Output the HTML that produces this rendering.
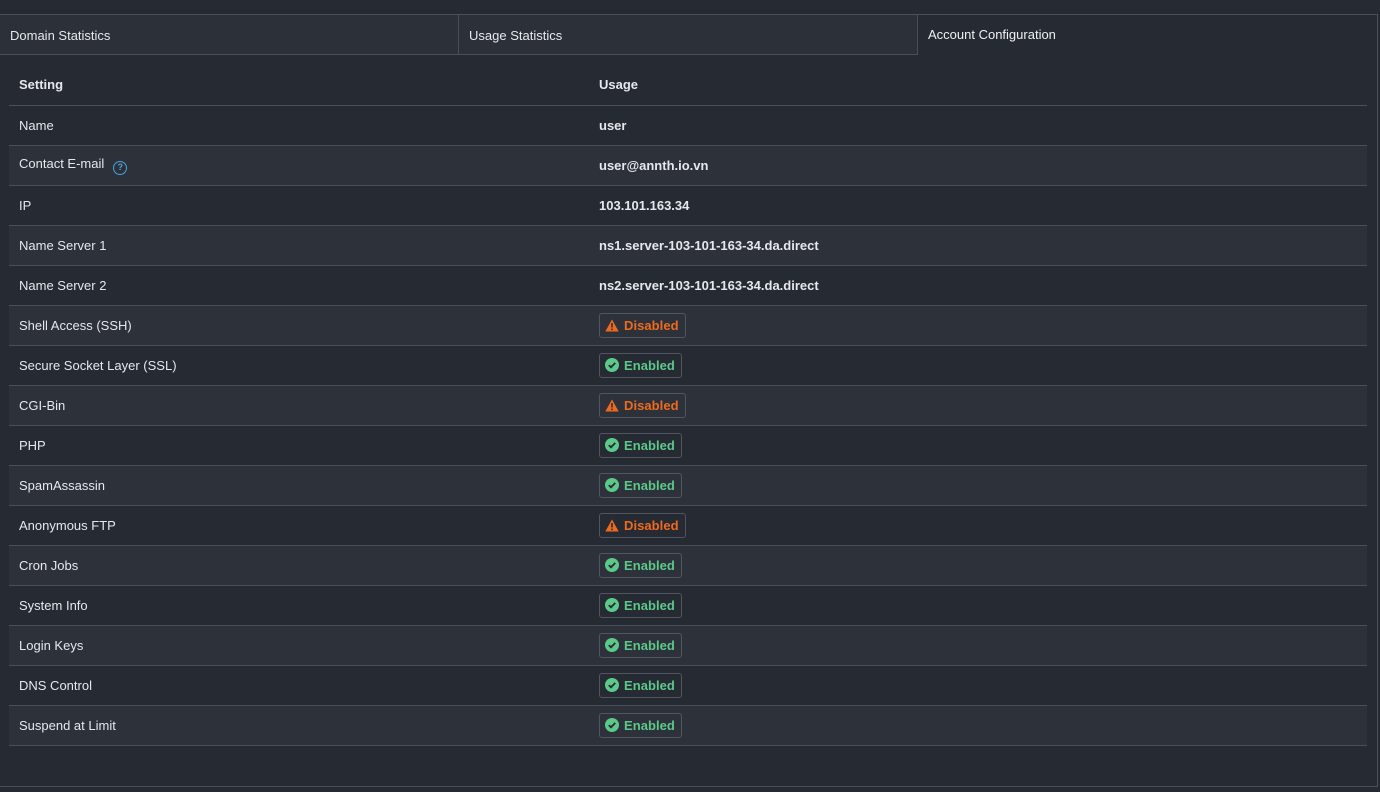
<!DOCTYPE html>
<html><head><meta charset="utf-8"><style>
*{box-sizing:border-box;margin:0;padding:0}
body{width:1380px;height:792px;background:#262a33;font-family:"Liberation Sans",sans-serif;font-size:13px;color:#e6e8ec;position:relative;overflow:hidden}
.panel{position:absolute;left:-1px;top:14px;width:1379px;height:773px;border:1px solid #4a4f5c}
.tab{position:absolute;top:14px;height:41px;line-height:41px;padding-left:10px;font-size:13px}
.t1{left:0;width:459px;background:#2c3039;border-top:1px solid #4a4f5c;border-bottom:1px solid #4a4f5c;border-right:1px solid #4a4f5c}
.t2{left:459px;width:459px;background:#2c3039;border-top:1px solid #4a4f5c;border-bottom:1px solid #4a4f5c;border-right:1px solid #4a4f5c}
.t3{left:918px;padding-left:10px;color:#eef0f3}
table{position:absolute;left:9px;top:64px;width:1358px;border-collapse:collapse}
td,th{height:40px;padding-left:10px;text-align:left;border-bottom:1px solid #4a4f5c;vertical-align:middle}
th{font-weight:bold;height:41px}
td:first-child,th:first-child{width:580px}
td.v{font-weight:bold}
tr.s td{background:#2d313a}
.b{display:inline-flex;align-items:center;gap:5px;height:25px;padding:0 6px 0 5px;border:1px solid #50555f;border-radius:3px;font-weight:bold;font-size:13px;letter-spacing:0.05px;vertical-align:middle}
.d{color:#f06a1e}.e{color:#5cc98a}
.q{display:inline-block;width:14px;height:14px;border:1.5px solid #4aa3e0;border-radius:50%;color:#4aa3e0;font-size:9px;line-height:11px;text-align:center;margin-left:9px;vertical-align:-2px;font-weight:bold}
</style></head><body>
<div class="panel"></div>
<div class="tab t1">Domain Statistics</div>
<div class="tab t2">Usage Statistics</div>
<div class="tab t3">Account Configuration</div>
<table>
<tr><th>Setting</th><th>Usage</th></tr>
<tr><td>Name</td><td class="v">user</td></tr>
<tr class="s"><td>Contact E-mail<span class="q">?</span></td><td class="v">user@annth.io.vn</td></tr>
<tr><td>IP</td><td class="v">103.101.163.34</td></tr>
<tr class="s"><td>Name Server 1</td><td class="v">ns1.server-103-101-163-34.da.direct</td></tr>
<tr><td>Name Server 2</td><td class="v">ns2.server-103-101-163-34.da.direct</td></tr>
<tr class="s"><td>Shell Access (SSH)</td><td><span class="b d"><svg width="14" height="13" viewBox="0 0 14 13"><path d="M7 0.5L13.7 12.5H0.3Z" fill="#f06a1e"/><rect x="6.2" y="4" width="1.6" height="4.5" fill="#2d313a"/><rect x="6.2" y="9.6" width="1.6" height="1.6" fill="#2d313a"/></svg>Disabled</span></td></tr>
<tr><td>Secure Socket Layer (SSL)</td><td><span class="b e"><svg width="14" height="14" viewBox="0 0 14 14"><circle cx="7" cy="7" r="7" fill="#5cc98a"/><path d="M3.8 7.2L6 9.3L10.3 4.9" stroke="#262a33" stroke-width="1.8" fill="none"/></svg>Enabled</span></td></tr>
<tr class="s"><td>CGI-Bin</td><td><span class="b d"><svg width="14" height="13" viewBox="0 0 14 13"><path d="M7 0.5L13.7 12.5H0.3Z" fill="#f06a1e"/><rect x="6.2" y="4" width="1.6" height="4.5" fill="#2d313a"/><rect x="6.2" y="9.6" width="1.6" height="1.6" fill="#2d313a"/></svg>Disabled</span></td></tr>
<tr><td>PHP</td><td><span class="b e"><svg width="14" height="14" viewBox="0 0 14 14"><circle cx="7" cy="7" r="7" fill="#5cc98a"/><path d="M3.8 7.2L6 9.3L10.3 4.9" stroke="#262a33" stroke-width="1.8" fill="none"/></svg>Enabled</span></td></tr>
<tr class="s"><td>SpamAssassin</td><td><span class="b e"><svg width="14" height="14" viewBox="0 0 14 14"><circle cx="7" cy="7" r="7" fill="#5cc98a"/><path d="M3.8 7.2L6 9.3L10.3 4.9" stroke="#262a33" stroke-width="1.8" fill="none"/></svg>Enabled</span></td></tr>
<tr><td>Anonymous FTP</td><td><span class="b d"><svg width="14" height="13" viewBox="0 0 14 13"><path d="M7 0.5L13.7 12.5H0.3Z" fill="#f06a1e"/><rect x="6.2" y="4" width="1.6" height="4.5" fill="#262a33"/><rect x="6.2" y="9.6" width="1.6" height="1.6" fill="#262a33"/></svg>Disabled</span></td></tr>
<tr class="s"><td>Cron Jobs</td><td><span class="b e"><svg width="14" height="14" viewBox="0 0 14 14"><circle cx="7" cy="7" r="7" fill="#5cc98a"/><path d="M3.8 7.2L6 9.3L10.3 4.9" stroke="#262a33" stroke-width="1.8" fill="none"/></svg>Enabled</span></td></tr>
<tr><td>System Info</td><td><span class="b e"><svg width="14" height="14" viewBox="0 0 14 14"><circle cx="7" cy="7" r="7" fill="#5cc98a"/><path d="M3.8 7.2L6 9.3L10.3 4.9" stroke="#262a33" stroke-width="1.8" fill="none"/></svg>Enabled</span></td></tr>
<tr class="s"><td>Login Keys</td><td><span class="b e"><svg width="14" height="14" viewBox="0 0 14 14"><circle cx="7" cy="7" r="7" fill="#5cc98a"/><path d="M3.8 7.2L6 9.3L10.3 4.9" stroke="#262a33" stroke-width="1.8" fill="none"/></svg>Enabled</span></td></tr>
<tr><td>DNS Control</td><td><span class="b e"><svg width="14" height="14" viewBox="0 0 14 14"><circle cx="7" cy="7" r="7" fill="#5cc98a"/><path d="M3.8 7.2L6 9.3L10.3 4.9" stroke="#262a33" stroke-width="1.8" fill="none"/></svg>Enabled</span></td></tr>
<tr class="s"><td>Suspend at Limit</td><td><span class="b e"><svg width="14" height="14" viewBox="0 0 14 14"><circle cx="7" cy="7" r="7" fill="#5cc98a"/><path d="M3.8 7.2L6 9.3L10.3 4.9" stroke="#262a33" stroke-width="1.8" fill="none"/></svg>Enabled</span></td></tr>
</table>
</body></html>
